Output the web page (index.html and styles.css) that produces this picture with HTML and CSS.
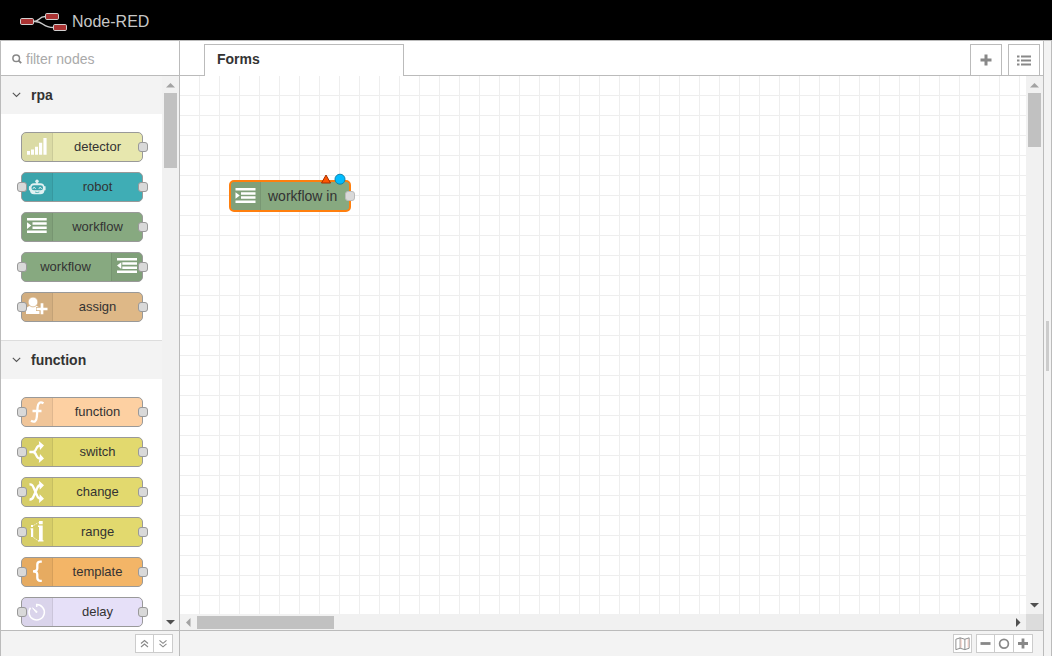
FILE: index.html
```html
<!DOCTYPE html>
<html lang="en">
<head>
<meta charset="utf-8">
<title>Node-RED</title>
<link rel="stylesheet" href="styles.css">
</head>
<body>
<header class="header">
  <svg class="logo" width="48" height="20" viewBox="0 0 48 20">
    <path d="M13.5 9.5C20 9.5 18 4.500 25.500 4.500M15 9.500C25 9.500 21 15.500 34 15.500" fill="none" stroke="#ccc" stroke-width="1.400"/>
    <g fill="#a33" stroke="#d0d0d0"><rect x=".5" y="6.500" width="13" height="6" rx="1.300"/><rect x="25.500" y="1.500" width="13" height="6" rx="1.300"/><rect x="33.500" y="12.500" width="13" height="6" rx="1.300"/></g>
  </svg>
  <span class="brand">Node-RED</span>
</header>
<div class="main">
  <aside class="palette">
    <div class="search">
      <svg width="10" height="10" viewBox="0 0 10 10"><circle cx="4.200" cy="4.200" r="3.300" fill="none" stroke="#888" stroke-width="1.500"/><path d="M6.600 6.600L9.200 9.200" stroke="#888" stroke-width="1.900"/></svg>
      <span>filter nodes</span>
    </div>
    <div class="palette-body">
      <div class="palette-list">
        <section class="category">
          <h3><svg width="9" height="6" viewBox="0 0 9 6"><path d="M.8 .8L4.500 4.500L8.200 .8" fill="none" stroke="#555" stroke-width="1.100"/></svg>rpa</h3>
          <div class="nodes">
            <div class="node detector"><svg class="icon" viewBox="0 0 30 28"><path fill="#fff" d="M5 18h3v3.700H5zM9 16.500h3v5.200H9zM13 13.700h3v8h-3zM17 9.700h3.200v12H17zM21.400 5h3.200v16.700h-3.200z"/></svg><span>detector</span><i class="port out"></i></div>
            <div class="node robot"><svg class="icon" viewBox="0 0 30 28"><g fill="#fff" opacity=".85"><circle cx="15" cy="8.300" r="1.700"/><path d="M14.300 8h1.400v3h-1.400z"/><rect x="8" y="10.300" width="14.400" height="11" rx="4"/><rect x="6.900" y="13" width="1.600" height="4.500" rx=".8"/><rect x="22" y="13" width="1.600" height="4.500" rx=".8"/></g><rect x="9.500" y="12.300" width="11.500" height="5" rx="2.300" fill="#3ca4ac"/><path d="M10.700 15.500q1.500-2 3 0M16.700 15.500q1.500-2 3 0" fill="none" stroke="#fff"/><path d="M13 19q2.200 1.200 4.400 0" fill="none" stroke="#3ca4ac" stroke-width=".8"/></svg><span>robot</span><i class="port in"></i><i class="port out"></i></div>
            <div class="node workflow"><svg class="icon" viewBox="0 0 30 28"><path fill="#fff" d="M5 5h19.700v2.600H5zM10.500 9.200h14.200v2.500H10.500zM10.500 13.400h14.200v2.500H10.500zM5 17.500h19.700v2.600H5zM5 9.300l4.300 3.300L5 15.900z"/></svg><span>workflow</span><i class="port out"></i></div>
            <div class="node workflow reverse"><svg class="icon" viewBox="0 0 30 28"><path fill="#fff" d="M5 5h20v2.600H5zM10.300 9.200H25v2.500H10.300zM10.300 13.400H25v2.500H10.300zM5 17.500h20v2.600H5zM9.300 9.300L5 12.600l4.300 3.300z"/></svg><span>workflow</span><i class="port in"></i><i class="port out"></i></div>
            <div class="node assign"><svg class="icon" viewBox="0 0 30 28"><path fill="#fff" d="M4 21v-3.500q0-4 4-4.500h6.500q3 .5 3 3v5z"/><circle cx="11" cy="9" r="4.900" fill="#fff" stroke="#d3af80" stroke-width=".8"/><path d="M20 9.500v12.500M14 16h12" stroke="#d3af80" stroke-width="4.200"/><path d="M20 10.200v11M14.500 16h11" stroke="#fff" stroke-width="2.700"/></svg><span>assign</span><i class="port in"></i><i class="port out"></i></div>
          </div>
        </section>
        <section class="category">
          <h3><svg width="9" height="6" viewBox="0 0 9 6"><path d="M.8 .8L4.500 4.500L8.200 .8" fill="none" stroke="#555" stroke-width="1.100"/></svg>function</h3>
          <div class="nodes">
            <div class="node function"><svg class="icon" viewBox="0 0 30 28"><path d="M21.500 5.200C18 3.300 16 5 15.600 9L14.800 19C14.500 23.500 12.500 24.700 9 22.800M10.500 13h9" fill="none" stroke="#fff" stroke-width="2.300"/></svg><span>function</span><i class="port in"></i><i class="port out"></i></div>
            <div class="node yellow"><svg class="icon" viewBox="0 0 30 28"><path d="M7.300 14H11Q13 14 14.300 10.700T18.500 7.300M11 14Q13 14 14.300 17.300T18.500 20.700" fill="none" stroke="#fff" stroke-width="2.300"/><path fill="#fff" d="M16.800 3l5.200 4.500-4 4.500zM18 16l4 4.500-5.200 4.500z"/></svg><span>switch</span><i class="port in"></i><i class="port out"></i></div>
            <div class="node yellow"><svg class="icon" viewBox="0 0 30 28"><path d="M7.500 6.500q2.800-.5 4 3l3.500 8q1.200 3.500 4 3.200M7.500 21.500q2.800.3 4-3l3.500-8Q16.200 7 19 7" fill="none" stroke="#fff" stroke-width="2.300"/><path fill="#fff" d="M17 2.800l5 4.400-4.300 4.600zM17.700 16.200l4.300 4.500-5 4.300z"/></svg><span>change</span><i class="port in"></i><i class="port out"></i></div>
            <div class="node yellow"><svg class="icon" viewBox="0 0 30 28"><path fill="#fff" d="M9 7h2v2H9zM8.500 10.300h2.700V19H9v-7.500h-.5zM17 3h3.700v3.200H17zM17 7.500h3.700v16H17zM16 7.500h2v1.500h-2zM16 22.300h5.500v1.300H16z"/><path d="M11.500 7.500l5-3M11.500 19.500l5 3.500" stroke="#fff" stroke-width=".8" stroke-dasharray="1.500 1"/></svg><span>range</span><i class="port in"></i><i class="port out"></i></div>
            <div class="node template"><svg class="icon" viewBox="0 0 30 28"><path d="M19.800 3.700H18.500Q15.300 3.700 15.300 6.700v3.500q0 3.100-4.300 3.100 4.300 0 4.300 3.100V19.800q0 3 3.200 3h1.300" fill="none" stroke="#fff" stroke-width="2.300"/></svg><span>template</span><i class="port in"></i><i class="port out"></i></div>
            <div class="node delay"><svg class="icon" viewBox="0 0 30 28"><path d="M14.700 9V6.600A7.700 7.700 0 1 1 8.500 9.700" fill="none" stroke="#fff" stroke-width="1.500"/><path d="M10.500 9.800l4.800 4-1 1z" fill="#fff" stroke="#fff"/></svg><span>delay</span><i class="port in"></i><i class="port out"></i></div>
          </div>
        </section>
      </div>
      <div class="vbar">
        <svg width="9" height="5" viewBox="0 0 9 5"><path d="M0 4.500L4.500 0L9 4.500z" fill="#a3a3a3"/></svg>
        <div class="thumb palette-thumb"></div>
        <svg class="end" width="9" height="5" viewBox="0 0 9 5"><path d="M0 0L4.500 4.500L9 0z" fill="#505050"/></svg>
      </div>
    </div>
    <div class="footer">
      <div class="group">
        <button><svg width="17" height="17" viewBox="0 0 17 17"><path d="M5 8.500L8.500 5.500L12 8.500M5 12L8.500 9L12 12" fill="none" stroke="#888" stroke-width="1.100"/></svg></button>
        <button><svg width="18" height="17" viewBox="0 0 18 17"><path d="M5.500 5.300L9 8.300L12.500 5.300M5.500 8.800L9 11.800L12.500 8.800" fill="none" stroke="#888" stroke-width="1.100"/></svg></button>
      </div>
    </div>
  </aside>
  <main class="workspace">
    <div class="tabs">
      <div class="lead"></div>
      <div class="tab">Forms</div>
      <div class="rest"></div>
      <div class="tab-button"><svg width="12" height="12" viewBox="0 0 12 12"><path d="M6 .5v11M.5 6h11" stroke="#888" stroke-width="3"/></svg></div>
      <div class="gap"></div>
      <div class="tab-button"><svg width="14" height="11" viewBox="0 0 14 11"><path d="M0 1.500h2.500M0 5.500h2.500M0 9.500h2.500M4 1.500h10M4 5.500h10M4 9.500h10" stroke="#888" stroke-width="2"/></svg></div>
      <div class="tail"></div>
    </div>
    <div class="stage">
      <div class="canvas">
        <svg width="846" height="538" viewBox="0 0 846 538">
          <rect x="50" y="105" width="120" height="30" rx="4" fill="#87a980" stroke="#ff7f0e" stroke-width="2"/>
          <path d="M54 106h26v28H54q-3 0-3-3v-22q0-3 3-3z" fill="#000" fill-opacity=".05"/>
          <path d="M80.500 106v28" stroke="#000" stroke-opacity=".1"/>
          <path fill="#fff" d="M55.500 112h20v2.600h-20zM61 116.200h14.500v2.500H61zM61 120.300h14.500v2.500H61zM55.500 124.400h20v2.600h-20zM55.500 116.300l4.300 3.200-4.300 3.300z"/>
          <text class="node-label" x="88" y="125">workflow in</text>
          <rect x="165.500" y="115.500" width="9" height="9" rx="2.500" fill="#d9d9d9" stroke="#bbb"/>
          <path d="M146 99L150.500 107H141.500z" fill="#f50" stroke="#a42e00"/>
          <circle cx="160" cy="103.200" r="5" fill="#00bcff" stroke="#0d83ad"/>
        </svg>
      </div>
      <div class="vbar canvas-bar">
        <svg width="9" height="5" viewBox="0 0 9 5"><path d="M0 4.500L4.500 0L9 4.500z" fill="#a3a3a3"/></svg>
        <div class="thumb canvas-thumb"></div>
        <svg class="end" width="9" height="5" viewBox="0 0 9 5"><path d="M0 0L4.500 4.500L9 0z" fill="#505050"/></svg>
      </div>
      <div class="hbar">
        <svg width="5" height="9" viewBox="0 0 5 9"><path d="M4.500 0L0 4.500L4.500 9z" fill="#a3a3a3"/></svg>
        <div class="hthumb"></div>
        <svg class="hend" width="5" height="9" viewBox="0 0 5 9"><path d="M0 0L4.500 4.500L0 9z" fill="#505050"/></svg>
      </div>
      <div class="corner"></div>
    </div>
    <div class="footer">
      <div class="group"><button><svg width="17" height="17" viewBox="0 0 18 17"><path d="M2 4l4.500-1.500 5 1.500L16 2.500v11L11.500 15l-5-1.500L2 15zM6.500 2.500v11M11.500 4v11" fill="none" stroke="#888"/><path d="M7.500 4v9M15 4v8.500" stroke="#f4c4b8"/></svg></button></div>
      <div class="group">
        <button><svg width="17" height="17" viewBox="0 0 17 17"><path d="M3.500 8.500h10" stroke="#888" stroke-width="2.800"/></svg></button>
        <button><svg width="18" height="17" viewBox="0 0 18 17"><circle cx="9" cy="8.700" r="4.400" fill="none" stroke="#888" stroke-width="1.700"/></svg></button>
        <button><svg width="18" height="17" viewBox="0 0 18 17"><path d="M4 8.500h10M9 3.500v10" stroke="#888" stroke-width="2.800"/></svg></button>
      </div>
    </div>
  </main>
  <div class="separator"><div class="grip"></div></div>
</div>
</body>
</html>
```

FILE: styles.css
```css
* { box-sizing: border-box; }
body {
  margin: 0;
  width: 1052px;
  height: 656px;
  overflow: hidden;
  display: flex;
  flex-direction: column;
  font: 14px/20px "Liberation Sans", Arial, sans-serif;
  color: #333;
  background: #fff;
}
svg { display: block; flex: none; }
.header {
  flex: none;
  height: 40px;
  background: #000;
  display: flex;
  align-items: center;
  padding: 3px 0 0 20px;
  gap: 4px;
}
.brand { font-size: 16px; color: #c7c7c7; }
.main {
  flex: 1;
  min-height: 0;
  display: flex;
  border: 1px solid #bbb;
  border-bottom: 0;
}
.palette {
  flex: none;
  width: 179px;
  display: flex;
  flex-direction: column;
  border-right: 1px solid #bbb;
}
.search {
  flex: none;
  height: 35px;
  border-bottom: 1px solid #bbb;
  display: flex;
  align-items: center;
  gap: 4px;
  padding: 2px 0 0 11px;
  color: #aaa;
}
.palette-body { flex: 1; min-height: 0; display: flex; overflow: hidden; }
.palette-list { flex: 1; overflow: hidden; }
.category + .category { border-top: 1px solid #ddd; }
.category h3 {
  margin: 0;
  height: 38px;
  background: #f3f3f3;
  display: flex;
  align-items: center;
  gap: 10px;
  padding-left: 11px;
  font-size: 14px;
}
.nodes {
  display: flex;
  flex-direction: column;
  gap: 10px;
  padding: 18px 0 18px 20px;
}
.node {
  position: relative;
  width: 122px;
  height: 30px;
  display: flex;
  border: 1px solid #999;
  border-radius: 5px;
  font-size: 13px;
  line-height: 28px;
}
.node span { flex: 1; text-align: center; }
.icon {
  width: 31px;
  height: 28px;
  background: rgba(0, 0, 0, .05);
  border-right: 1px solid rgba(0, 0, 0, .07);
  border-radius: 4px 0 0 4px;
}
.reverse { flex-direction: row-reverse; }
.reverse span { padding-right: 2px; }
.reverse .icon {
  border-right: 0;
  border-left: 1px solid rgba(0, 0, 0, .07);
  border-radius: 0 4px 4px 0;
}
.port {
  position: absolute;
  top: 9px;
  width: 10px;
  height: 10px;
  border: 1px solid #999;
  border-radius: 3px;
  background: #d9d9d9;
}
.port.in { left: -5px; }
.port.out { right: -6px; }
.detector { background: #e7e7ae; }
.robot { background: #3fadb5; }
.workflow { background: #87a980; }
.assign { background: #deb887; }
.function { background: #fdd0a2; }
.yellow { background: #e2d96e; }
.template { background: #f3b567; }
.delay { background: #e6e0f8; }
.vbar {
  flex: none;
  width: 17px;
  background: #f1f1f1;
  display: flex;
  flex-direction: column;
  align-items: center;
  padding: 7px 0 5px;
}
.canvas-bar { padding-bottom: 6px; }
.thumb { width: 13px; background: #c1c1c1; margin-top: 5px; }
.palette-thumb { height: 75px; }
.canvas-thumb { height: 54px; }
.end { margin-top: auto; }
.footer {
  flex: none;
  height: 26px;
  background: #f3f3f3;
  border-top: 1px solid #bbb;
  display: flex;
  justify-content: flex-end;
  align-items: flex-start;
  gap: 4px;
  padding: 3px 6px 0 0;
}
.workspace .footer { padding-right: 10px; }
.group { display: flex; border: 1px solid #ccc; background: #fff; }
.group button { display: block; padding: 0; border: 0; background: none; }
.group button + button { border-left: 1px solid #ccc; }
.workspace {
  flex: none;
  width: 864px;
  display: flex;
  flex-direction: column;
  border-right: 1px solid #bbb;
}
.tabs { flex: none; height: 35px; display: flex; align-items: flex-end; }
.lead, .rest, .gap, .tail { height: 35px; border-bottom: 1px solid #bbb; }
.lead { width: 24px; }
.rest { flex: 1; }
.gap { width: 6px; }
.tail { width: 3px; }
.tab {
  width: 200px;
  height: 32px;
  border: 1px solid #bbb;
  border-bottom: 0;
  padding: 4px 12px;
  font-weight: bold;
}
.tab-button {
  width: 32px;
  height: 32px;
  border: 1px solid #bbb;
  display: flex;
  align-items: center;
  justify-content: center;
}
.stage {
  flex: 1;
  min-height: 0;
  display: grid;
  grid-template-columns: 846px 17px;
  grid-template-rows: 538px 16px;
}
.canvas {
  background:
    repeating-linear-gradient(90deg, transparent 0 19px, #eee 19px 20px),
    repeating-linear-gradient(transparent 0 19px, #eee 19px 20px);
}
.node-label { font-size: 14px; fill: #333; }
.hbar { background: #f1f1f1; display: flex; align-items: center; padding: 0 5px 0 6px; }
.hthumb { width: 137px; height: 13px; margin: 1px 0 0 6px; background: #c1c1c1; }
.hend { margin-left: auto; }
.corner { background: #dcdcdc; }
.separator {
  flex: 1;
  background: #f3f3f3;
  display: flex;
  justify-content: center;
  align-items: flex-start;
  padding-top: 280px;
}
.grip { width: 3px; height: 50px; background: #ccc; }
```
